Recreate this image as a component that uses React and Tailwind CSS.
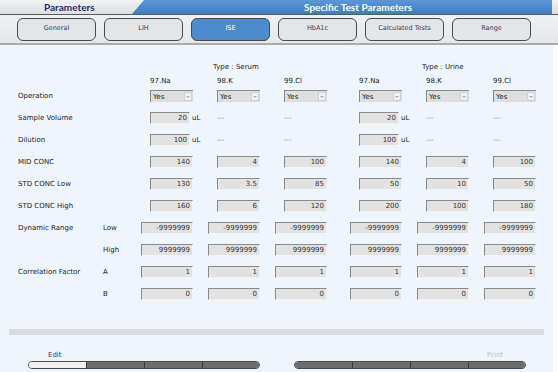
import React from 'react';

const COLS = [53, 67, 67, 75, 67, 67];

function Box({ value, w = 43 }) {
  return (
    <div
      className="h-[12px] bg-[#e2e2e2] border-t border-l border-t-[#8a8a8a] border-l-[#8a8a8a] border-b border-r border-b-[#f4f4f4] border-r-[#f4f4f4] text-right pr-[2px] leading-[11px] text-[#333]"
      style={{ width: w }}
    >
      {value}
    </div>
  );
}

function Select() {
  return (
    <div className="w-[43px] h-[12px] bg-[#dedede] border-t border-l border-t-[#8a8a8a] border-l-[#8a8a8a] flex items-center justify-between pl-[2px] pr-[1px]">
      <span className="leading-[10px] text-[#222]">Yes</span>
      <span className="w-[8px] h-[9px] bg-[#f0f0f0] border border-[#d0d0d0] flex items-center justify-center">
        <span className="block w-0 h-0 border-l-[2px] border-r-[2px] border-t-[2px] border-l-transparent border-r-transparent border-t-[#b0b0b0]" />
      </span>
    </div>
  );
}

function Cell({ c, w }) {
  let inner = null;
  if (c === 'sel') inner = <Select />;
  else if (c === '---') inner = <div className="w-[43px] text-[#888]">---</div>;
  else if (c && c.vol) {
    inner = (
      <div className="w-[43px] flex items-center">
        <Box value={c.vol} w={40} />
        <span className="ml-[2px] -mr-[10px] text-[#222]">uL</span>
      </div>
    );
  } else if (c && c.wide) inner = <Box value={c.wide} w={52} />;
  else if (c !== undefined) inner = <Box value={c} />;
  return (
    <div className="flex justify-end items-center" style={{ width: w }}>
      {inner}
    </div>
  );
}

function Row({ label, sub, cells, h = 'h-[22px]' }) {
  return (
    <div className={`flex items-center ${h}`}>
      <div className="w-[103px] pl-[18px] whitespace-nowrap text-[#222]">{label}</div>
      <div className="w-[37px] text-[#222]">{sub}</div>
      {cells.map((c, i) => (
        <Cell key={i} c={c} w={COLS[i]} />
      ))}
    </div>
  );
}

const W = (v) => ({ wide: v });

export default function App() {
  return (
    <div className="w-[558px] h-[372px] overflow-hidden bg-white font-['DejaVu_Sans',sans-serif] text-[7px] flex flex-col">
      {/* title bar */}
      <div className="h-[14px] flex bg-gradient-to-b from-[#f2f3f5] to-[#dcdee2]">
        <div className="w-[140px] flex items-center pl-[44px] font-['Lato',sans-serif] font-bold text-[10px] text-[#1e2a70]">
          Parameters
        </div>
        <div className="flex-1 -ml-[8px] mr-[6px] bg-gradient-to-b from-[#5b97d6] to-[#3f7cc2] [clip-path:polygon(12px_0,100%_0,100%_100%,0_100%)] flex items-center pl-[172px] font-['Lato',sans-serif] font-bold text-[10px] text-white">
          Specific Test Parameters
        </div>
      </div>
      <div className="h-px bg-[#5a5a5a]" />
      {/* tabs */}
      <div className="h-[28px] bg-gradient-to-b from-[#f0f1f2] to-[#e6e8ea] flex items-center pl-[17px] gap-[8px]">
        {['General', 'LIH', 'ISE', 'HbA1c', 'Calculated Tests', 'Range'].map((t) => (
          <div
            key={t}
            className={`w-[79px] h-[23px] rounded-[6px] border-[1.5px] border-[#4a4a4a] flex items-center justify-center text-[6.5px] ${
              t === 'ISE' ? 'bg-[#4d8bcc] text-white border-[#3a6aa0]' : 'bg-[#e3e5e7] text-[#33405e]'
            }`}
          >
            {t}
          </div>
        ))}
      </div>
      <div className="h-[2px] bg-[#a9abad]" />
      {/* content */}
      <div className="flex-1 bg-[#eef5fc] border-r-[5px] border-r-white pt-[15px] flex flex-col">
        <div className="flex h-[14px] items-center text-[#222]">
          <div className="w-[213px]" />
          <div className="w-[209px]">Type : Serum</div>
          <div>Type : Urine</div>
        </div>
        <div className="flex h-[15px] items-center text-[#222]">
          <div className="w-[150px]" />
          <div className="w-[67px]">97.Na</div>
          <div className="w-[67px]">98.K</div>
          <div className="w-[75px]">99.Cl</div>
          <div className="w-[67px]">97.Na</div>
          <div className="w-[67px]">98.K</div>
          <div>99.Cl</div>
        </div>
        <Row label="Operation" h="h-[14px]" cells={['sel', 'sel', 'sel', 'sel', 'sel', 'sel']} />
        <div className="h-[4px]" />
        <Row label="Sample Volume" cells={[{ vol: '20' }, '---', '---', { vol: '20' }, '---', '---']} />
        <Row label="Dilution" cells={[{ vol: '100' }, '---', '---', { vol: '100' }, '---', '---']} />
        <Row label="MID CONC" cells={['140', '4', '100', '140', '4', '100']} />
        <Row label="STD CONC Low" cells={['130', '3.5', '85', '50', '10', '50']} />
        <Row label="STD CONC High" cells={['160', '6', '120', '200', '100', '180']} />
        <Row label="Dynamic Range" sub="Low" cells={Array(6).fill(W('-9999999'))} />
        <Row label="" sub="High" cells={Array(6).fill(W('9999999'))} />
        <Row label="Correlation Factor" sub="A" cells={Array(6).fill(W('1'))} />
        <Row label="" sub="B" cells={Array(6).fill(W('0'))} />
        <div className="mt-[24px] mx-[9px] h-[6px] bg-[#d8dcdf]" />
        <div className="mt-[15px] flex">
          <div className="w-[264px] pl-[28px]">
            <div className="pl-[20px] h-[11px] text-[#2a3a70]">Edit</div>
            <div className="w-[232px] h-[8px] rounded-full border border-[#4a4a4a] overflow-hidden flex">
              <div className="w-[57px] bg-[#f2f2f2]" />
              <div className="w-[58px] bg-[#6e6e6e] border-l border-[#3a3a3a]" />
              <div className="w-[58px] bg-[#6e6e6e] border-l border-[#3a3a3a]" />
              <div className="flex-1 bg-[#6e6e6e] border-l border-[#3a3a3a]" />
            </div>
          </div>
          <div className="pl-[30px]">
            <div className="pl-[193px] h-[11px] text-[#c4c4c4]">Print</div>
            <div className="w-[232px] h-[8px] rounded-full border border-[#4a4a4a] overflow-hidden flex">
              <div className="w-[57px] bg-[#6e6e6e]" />
              <div className="w-[58px] bg-[#6e6e6e] border-l border-[#3a3a3a]" />
              <div className="w-[58px] bg-[#6e6e6e] border-l border-[#3a3a3a]" />
              <div className="flex-1 bg-[#6e6e6e] border-l border-[#3a3a3a]" />
            </div>
          </div>
        </div>
      </div>
    </div>
  );
}
